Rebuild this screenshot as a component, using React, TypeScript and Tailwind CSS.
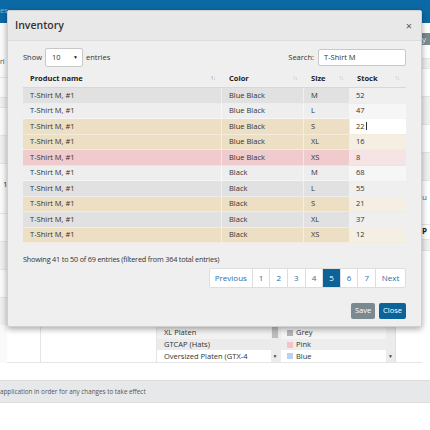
import { ReactNode } from 'react';

type Row = { color: string; size: string; stock: string; tone: 'gray' | 'light' | 'tan' | 'pink' | 'edit' };

const rows: Row[] = [
    { color: 'Blue Black', size: 'M', stock: '52', tone: 'gray' },
    { color: 'Blue Black', size: 'L', stock: '47', tone: 'light' },
    { color: 'Blue Black', size: 'S', stock: '22', tone: 'edit' },
    { color: 'Blue Black', size: 'XL', stock: '16', tone: 'tan' },
    { color: 'Blue Black', size: 'XS', stock: '8', tone: 'pink' },
    { color: 'Black', size: 'M', stock: '68', tone: 'light' },
    { color: 'Black', size: 'L', stock: '55', tone: 'gray' },
    { color: 'Black', size: 'S', stock: '21', tone: 'tan' },
    { color: 'Black', size: 'XL', stock: '37', tone: 'gray' },
    { color: 'Black', size: 'XS', stock: '12', tone: 'tan' },
];

const rowBg = {
    gray: 'bg-[#e1e1e1]',
    light: 'bg-[#eeeeee]',
    tan: 'bg-[#ecdfc3]',
    edit: 'bg-[#ecdfc3]',
    pink: 'bg-[#efcbce]',
};

const stockBg = {
    gray: 'bg-[#efefef]',
    light: 'bg-[#f6f6f6]',
    tan: 'bg-[#f4efe2]',
    edit: 'bg-white',
    pink: 'bg-[#f6e4e5]',
};

const SortIcon = ({ dark }: { dark?: boolean }) => (
    <span className={`flex text-[6.5px] leading-none ${dark ? 'text-[#777]' : 'text-[#c4c4c4]'}`}>
        <span>↑</span>
        <span className="-ml-[1px] text-[#c4c4c4]">↓</span>
    </span>
);

const HeadCell = ({ children, w, dark }: { children: ReactNode; w: string; dark?: boolean }) => (
    <div className={`${w} flex items-center justify-between pl-[7px] pr-[6px] font-bold text-[#222]`}>
        <span>{children}</span>
        <SortIcon dark={dark} />
    </div>
);

const pages = ['Previous', '1', '2', '3', '4', '5', '6', '7', 'Next'];

export default function App() {
    return (
        <div className="relative h-[430px] w-[430px] overflow-hidden bg-white font-['Open_Sans','Liberation_Sans',sans-serif] text-[7.5px] text-[#333]">
            {/* page behind the dialog */}
            <div className="flex h-[23px] items-start bg-[#0b6aa5] pt-[5px] text-[#8fb9d9]">
                <span>es</span>
            </div>
            <div className="flex h-[340px]">
                <div className="flex w-[7px] flex-col bg-[#fafafa]">
                    <div className="h-[34px]" />
                    <div className="h-[20px] whitespace-nowrap text-[7px] text-[#444]">ri</div>
                    <div className="h-[20px] border-t border-[#e5e5e5]" />
                    <div className="h-[10px] border-t border-[#e5e5e5] bg-[#f0f0f0]" />
                    <div className="h-[28px] border-t border-[#e5e5e5]" />
                    <div className="h-[28px] border-t border-[#e5e5e5] bg-[#f0f0f0]" />
                    <div className="h-[50px] border-t border-[#e5e5e5] pt-[14px] pl-[3px] text-[8px]">1</div>
                    <div className="h-[28px] border-t border-[#e5e5e5]" />
                    <div className="h-[28px] border-t border-[#e5e5e5] bg-[#f0f0f0]" />
                    <div className="h-[28px] border-t border-[#e5e5e5]" />
                    <div className="h-[28px] border-t border-[#e5e5e5] bg-[#f0f0f0]" />
                </div>
                <div className="flex flex-1 flex-col">
                    <div className="h-[304px]" />
                    <div className="flex h-[36px] border-b border-[#e5e5e5]">
                        <div className="w-[34px] border-r border-[#e5e5e5]" />
                        <div className="w-[116px] border-r border-[#e5e5e5]" />
                        <div className="flex w-[114px] flex-col">
                            <div className="flex h-[12px] items-center bg-[#f2f2f2] pl-[7px]">XL Platen</div>
                            <div className="flex h-[12px] items-center bg-[#ebebeb] pl-[7px]">GTCAP (Hats)</div>
                            <div className="flex h-[12px] items-center bg-white pl-[7px]">Oversized Platen (GTX-4</div>
                        </div>
                        <div className="flex w-[8px] flex-col bg-[#ececec]">
                            <div className="mx-[1px] h-[11px] bg-[#bdbdbd]" />
                            <div className="flex-1" />
                            <div className="flex h-[10px] items-center justify-center text-[5px] text-[#444]">▼</div>
                        </div>
                        <div className="w-[2px] bg-[#ececec]" />
                        <div className="flex w-[105px] flex-col">
                            <div className="flex h-[12px] items-center gap-[3px] bg-[#f4f4f4] pl-[6px]">
                                <span className="h-[6px] w-[6px] bg-[#b4b4b4]" />Grey
                            </div>
                            <div className="flex h-[12px] items-center gap-[3px] bg-[#ededed] pl-[6px]">
                                <span className="h-[6px] w-[6px] bg-[#f4c3ca]" />Pink
                            </div>
                            <div className="flex h-[12px] items-center gap-[3px] bg-white pl-[6px]">
                                <span className="h-[6px] w-[6px] bg-[#b9d3f5]" />Blue
                            </div>
                        </div>
                        <div className="flex w-[10px] flex-col justify-end border-r border-[#e0e0e0] bg-[#ececec]">
                            <div className="flex h-[10px] items-center justify-center text-[5px] text-[#444]">▼</div>
                        </div>
                        <div className="flex flex-1 flex-col">
                            <div className="h-[2px]" />
                        </div>
                    </div>
                </div>
                <div className="flex w-[8px] flex-col">
                    <div className="h-[10px]" />
                    <div className="flex h-[12px] items-center bg-[#7b8991] text-[8px] text-white">y</div>
                    <div className="h-[14px] border-b border-[#e5e5e5]" />
                    <div className="h-[10px] border-b border-[#e5e5e5] bg-[#f0f0f0]" />
                    <div className="h-[28px] border-b border-[#e5e5e5]" />
                    <div className="h-[28px] border-b border-[#e5e5e5] bg-[#f0f0f0]" />
                    <div className="h-[28px] border-b border-[#e5e5e5]" />
                    <div className="h-[28px] border-b border-[#e5e5e5] bg-[#f0f0f0]" />
                    <div className="h-[30px] pt-[10px] text-[8px] text-[#2a6ea8]">u</div>
                    <div className="h-[14px] border-b border-[#e5e5e5]" />
                    <div className="h-[14px] text-[8px] font-bold text-[#222]">P</div>
                    <div className="h-[12px] border-y border-[#e5e5e5] bg-[#f0f0f0]" />
                </div>
            </div>
            <div className="mt-[17px] flex h-[23px] items-center border-y border-[#dcdcdc] bg-[#e7e8ea] text-[6.3px] text-[#555]">
                <span>application in order for any changes to take effect</span>
            </div>

            {/* dialog */}
            <div className="absolute left-[7px] top-[10px] flex h-[317px] w-[415px] flex-col rounded-[2px] border border-[#d0d0d0] bg-[#efefef] shadow-[0_2px_6px_rgba(0,0,0,0.35)]">
                <div className="flex h-[30px] items-center justify-between border-b border-[#dcdcdc] bg-[#e8e8e8] pl-[7px] pr-[9px]">
                    <span className="text-[10.5px] font-semibold text-[#333]">Inventory</span>
                    <span className="text-[11px] leading-none text-[#555]">×</span>
                </div>
                <div className="flex flex-1 flex-col px-[15px] pt-[7px]">
                    <div className="flex h-[19px] items-center justify-between">
                        <div className="flex items-center gap-[3px]">
                            <span>Show</span>
                            <div className="flex h-[19px] w-[38px] items-center justify-between rounded-[2px] border border-[#c8c8c8] bg-white pl-[6px] pr-[4px]">
                                <span>10</span>
                                <span className="text-[5px] text-[#222]">▼</span>
                            </div>
                            <span>entries</span>
                        </div>
                        <div className="flex items-center gap-[4px]">
                            <span>Search:</span>
                            <div className="flex h-[17px] w-[88px] items-center rounded-[2px] border border-[#c8c8c8] bg-white pl-[5px]">
                                T-Shirt M
                            </div>
                        </div>
                    </div>
                    <div className="mt-[3px] flex flex-col">
                        <div className="flex h-[18px] border-b border-[#d8d8d8]">
                            <HeadCell w="w-[199px]" dark>Product name</HeadCell>
                            <HeadCell w="w-[82px]">Color</HeadCell>
                            <HeadCell w="w-[46px]">Size</HeadCell>
                            <HeadCell w="w-[56px]">Stock</HeadCell>
                        </div>
                        {rows.map((r, i) => (
                            <div key={i} className={`flex h-[15.5px] border-b border-white/40 ${rowBg[r.tone]}`}>
                                <div className="flex w-[199px] items-center border-r border-white/50 pl-[7px]">T-Shirt M, #1</div>
                                <div className="flex w-[82px] items-center border-r border-white/50 pl-[7px]">{r.color}</div>
                                <div className="flex w-[46px] items-center border-r border-white/50 pl-[7px]">{r.size}</div>
                                <div className={`flex w-[56px] items-center pl-[6px] ${stockBg[r.tone]}`}>
                                    {r.stock}
                                    {r.tone === 'edit' && <span className="ml-[1px] h-[8px] w-px bg-[#333]" />}
                                </div>
                            </div>
                        ))}
                    </div>
                    <div className="mt-[11px] text-[7.3px] tracking-[-0.2px]">Showing 41 to 50 of 69 entries (filtered from 364 total entries)</div>
                    <div className="mt-[3px] flex justify-end">
                        <div className="flex h-[20px] rounded-[2px] border border-[#dddddd] bg-white text-[8px] text-[#2a6ea8]">
                            {pages.map((p, i) => (
                                <div
                                    key={p}
                                    className={`flex items-center justify-center ${i > 0 ? 'border-l border-[#dddddd]' : ''} ${
                                        p === 'Previous' ? 'w-[42px]' : p === 'Next' ? 'w-[30px]' : 'w-[17.6px]'
                                    } ${p === '5' ? 'bg-[#0c6399] text-white' : ''}`}
                                >
                                    {p}
                                </div>
                            ))}
                        </div>
                    </div>
                    <div className="mt-auto flex justify-end gap-[4px] pb-[7px]">
                        <div className="flex h-[16px] w-[24px] items-center justify-center rounded-[2px] bg-[#7b8991] text-[7.5px] text-white">Save</div>
                        <div className="flex h-[16px] w-[27px] items-center justify-center rounded-[2px] bg-[#0c6399] text-[7.5px] text-white">Close</div>
                    </div>
                </div>
            </div>
        </div>
    );
}
